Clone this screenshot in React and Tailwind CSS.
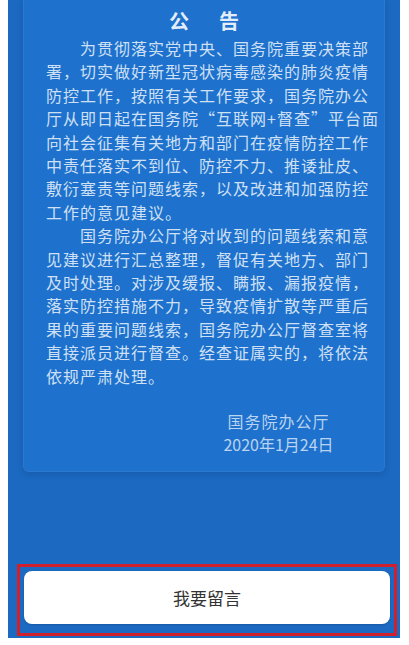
const lines = [
  { text: "为贯彻落实党中央、国务院重要决策部", indent: true },
  { text: "署，切实做好新型冠状病毒感染的肺炎疫情" },
  { text: "防控工作，按照有关工作要求，国务院办公" },
  { text: "厅从即日起在国务院“互联网+督查”平台面" },
  { text: "向社会征集有关地方和部门在疫情防控工作" },
  { text: "中责任落实不到位、防控不力、推诿扯皮、" },
  { text: "敷衍塞责等问题线索，以及改进和加强防控" },
  { text: "工作的意见建议。", last: true },
  { text: "国务院办公厅将对收到的问题线索和意", indent: true },
  { text: "见建议进行汇总整理，督促有关地方、部门" },
  { text: "及时处理。对涉及缓报、瞒报、漏报疫情，" },
  { text: "落实防控措施不力，导致疫情扩散等严重后" },
  { text: "果的重要问题线索，国务院办公厅督查室将" },
  { text: "直接派员进行督查。经查证属实的，将依法" },
  { text: "依规严肃处理。", last: true },
];

const App = () => {
  return (
    <div
      className="h-[645px] w-[409px] overflow-hidden bg-white"
      style={{ fontFamily: '"Noto Sans CJK SC", "Noto Sans", sans-serif' }}
    >
      <div className="ml-[8px] flex h-[638px] w-[392px] flex-col bg-[#1b69c1]">
        <section className="mx-[15px] h-[472px] rounded-b-[6px] border-x border-b border-[#2a78cf] bg-[#1e71cc] shadow-[0_2px_6px_rgba(10,50,110,0.25)]">
          <h1 className="mt-[7px] flex justify-center gap-[30px] text-[20px] font-bold leading-[28px] text-[#e4eefa]">
            <span>公</span>
            <span>告</span>
          </h1>
          <div className="mt-[2px] pl-[22px] pr-[22px] text-[16px] leading-[23.4px] tracking-[1px] text-[#cfe0f5]">
            {lines.map((line, i) => (
              <div
                key={i}
                className={
                  line.last
                    ? "whitespace-nowrap"
                    : "whitespace-nowrap text-justify [text-align-last:justify]"
                }
              >
                {line.indent && <span className="inline-block w-[34px]" />}
                {line.text}
              </div>
            ))}
          </div>
          <div className="mt-[22px] flex flex-col items-center pl-[149px] text-[16px] leading-[23px] text-[#b9d3f1]">
            <p className="tracking-[1px]">国务院办公厅</p>
            <p>2020年1月24日</p>
          </div>
        </section>

        <div className="mt-auto mb-[2px] ml-[9px] mr-[3px] border-[3px] border-[#d0202e] px-[4px] pt-[4px] pb-[9px]">
          <button className="h-[53px] w-full rounded-[8px] bg-white text-[17px] text-[#333] shadow-[0_1px_2px_rgba(0,0,0,0.15)]">
            我要留言
          </button>
        </div>
      </div>
    </div>
  );
};

export default App;
